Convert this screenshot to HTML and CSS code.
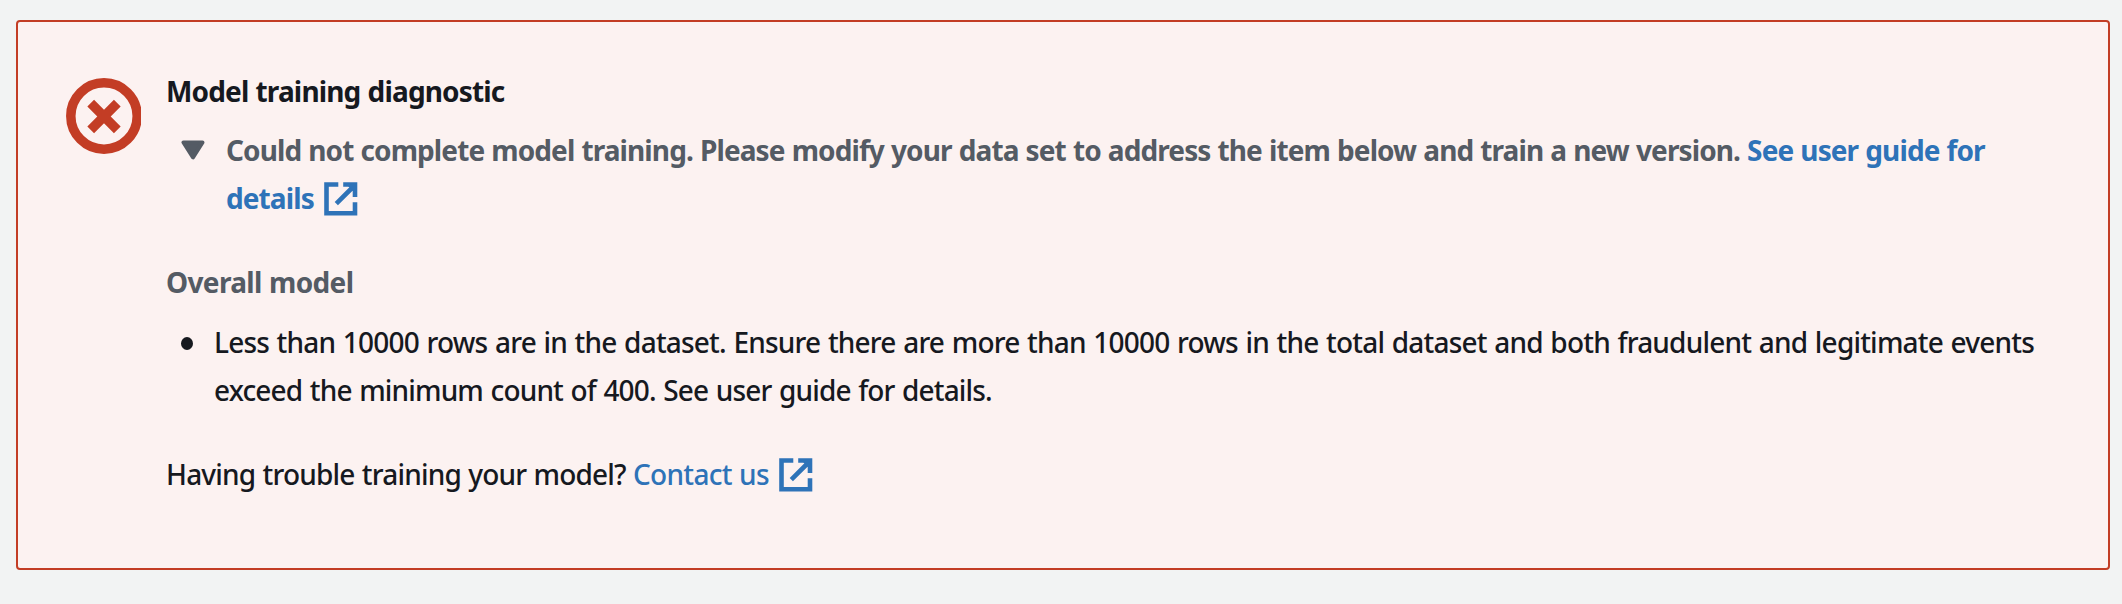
FILE: index.html
```html
<!DOCTYPE html>
<html lang="en">
<head>
<meta charset="utf-8">
<title>Model training diagnostic</title>
<link rel="stylesheet" href="styles.css">
</head>
<body>
<section class="alert" role="alert">
  <svg class="alert-icon" viewBox="0 0 75 76" aria-hidden="true">
    <circle cx="38" cy="38" r="33.2" />
    <path d="M24.7 25.2L51.3 51.8M51.3 25.2L24.7 51.8" />
  </svg>
  <div class="alert-body">
    <h1 class="title">Model training diagnostic</h1>
    <div class="summary">
      <svg class="caret" viewBox="0 0 24 20" aria-hidden="true"><path d="M2.5 2.5H21.5L12 17.3Z" /></svg>
      <p class="summary-text">Could not complete model training. Please modify your data set to address the item below and train a new version. <a class="link">See user guide for<br><span class="link-tail">details</span><svg class="external" viewBox="0 0 34 34" aria-hidden="true"><path d="M14.3 2.5H2.5V31.3H31V20.3" /><path d="M19.2 2.5H31V15M31 3L12.3 21.6" /><path class="fill" d="M22 2H32V12Z" /></svg></a></p>
    </div>
    <h2 class="subtitle">Overall model</h2>
    <ul class="issues">
      <li class="issue"><span class="issue-first">Less than 10000 rows are in the dataset. Ensure there are more than 10000 rows in the total dataset and both fraudulent and legitimate events</span><br><span class="issue-second">exceed the minimum count of 400. See user guide for details.</span></li>
    </ul>
    <p class="help"><span class="question">Having trouble training your model?</span> <a class="link contact">Contact us<svg class="external" viewBox="0 0 34 34" aria-hidden="true"><path d="M14.3 2.5H2.5V31.3H31V20.3" /><path d="M19.2 2.5H31V15M31 3L12.3 21.6" /><path class="fill" d="M22 2H32V12Z" /></svg></a></p>
  </div>
</section>
</body>
</html>
```
FILE: styles.css
```css
* {
  box-sizing: border-box;
}

body {
  margin: 0;
  padding: 20px 12px 34px 16px;
  background: #f2f3f3;
  color: #16191f;
  font: 500 28px/48px "Noto Sans", "Open Sans", sans-serif;
  white-space: nowrap;
}

h1, h2, p, ul {
  margin: 0;
  padding: 0;
  font-size: inherit;
}

.alert {
  display: flex;
  gap: 25px;
  height: 550px;
  padding: 45px 47px;
  border: 2px solid #c33d25;
  border-radius: 4px;
  background: #fcf2f1;
}

.alert-icon {
  flex: none;
  width: 75px;
  height: 76px;
  margin: 11px 0 0 1px;
  fill: none;
  stroke: #c33d25;
  stroke-width: 9.5;
}

.title {
  font-weight: 700;
  letter-spacing: -0.85px;
  word-spacing: 0.7px;
}

.summary {
  display: flex;
  gap: 21px;
  margin-top: 11px;
  padding-left: 15px;
  color: #545b64;
  font-weight: 700;
}

.summary-text {
  letter-spacing: -0.9px;
  word-spacing: 0.7px;
}

.caret {
  flex: none;
  width: 24px;
  height: 20px;
  margin-top: 14px;
  fill: #545b64;
  stroke: #545b64;
  stroke-width: 4;
  stroke-linejoin: round;
}

.link {
  color: #2e73b8;
}

.external {
  width: 34px;
  height: 34px;
  margin-left: 10px;
  vertical-align: -7px;
  fill: none;
  stroke: #2e73b8;
  stroke-width: 4.6;
}

.external .fill {
  fill: #2e73b8;
  stroke: none;
}

.subtitle {
  margin-top: 36px;
  color: #545b64;
  font-weight: 700;
  letter-spacing: -0.65px;
  word-spacing: 0.7px;
}

.issues {
  margin-top: 12px;
  list-style: none;
}

.issue {
  display: flow-root;
  position: relative;
  padding-left: 48px;
}

.issue::before {
  content: "";
  position: absolute;
  left: 15px;
  top: 19px;
  width: 12px;
  height: 13px;
  border-radius: 50%;
  background: #16191f;
}

.issue-first {
  letter-spacing: -0.8px;
  word-spacing: 1.1px;
}

.issue-second {
  letter-spacing: -0.85px;
  word-spacing: 1.1px;
}

.help {
  margin-top: 36px;
  letter-spacing: -0.8px;
  word-spacing: 0.7px;
}

.contact {
  letter-spacing: -0.7px;
}
```
